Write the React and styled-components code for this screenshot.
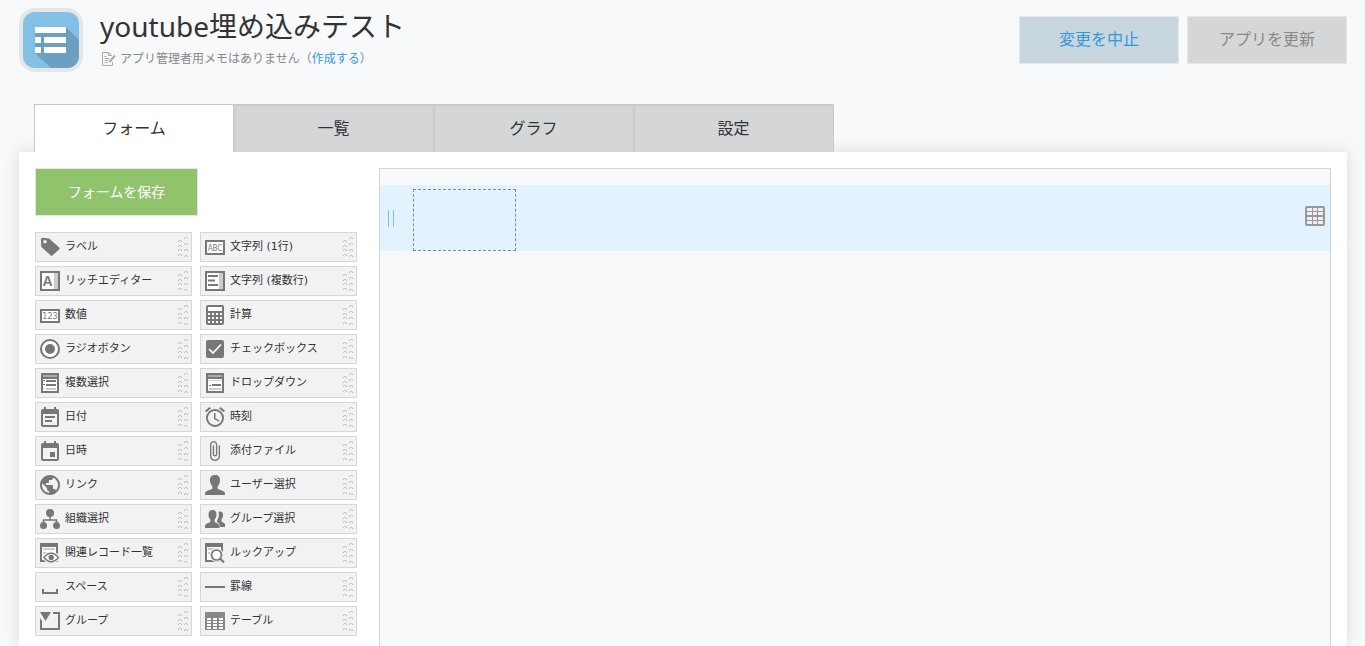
import React, { useState } from "react";
import styled, { createGlobalStyle, css } from "styled-components";

const GlobalStyle = createGlobalStyle`
  *, *::before, *::after { box-sizing: border-box; }
  body {
    margin: 0;
    background: #f7f9fa;
    color: #333;
    font-family: "Noto Sans", "Noto Sans CJK JP", sans-serif;
    font-weight: 400;
  }
  button { font: inherit; cursor: pointer; }
`;

const Page = styled.div`
  display: flex;
  flex-direction: column;
  height: 100vh;
  min-height: 640px;
  padding: 8px 18px 0 19px;
  overflow: hidden;
`;

const Header = styled.header`
  display: flex;
  align-items: flex-start;
  height: 96px;
`;

const AppLogo = styled.svg`
  flex: none;
  width: 64px;
  height: 64px;
  margin-right: 17px;
`;

const TitleBlock = styled.div`
  flex: 1;
  min-width: 0;
`;

const Title = styled.h1`
  margin: 0 0 4px;
  font-size: 28px;
  font-weight: 400;
  line-height: 36px;
  white-space: nowrap;
`;

const Memo = styled.p`
  display: flex;
  align-items: center;
  gap: 4px;
  margin: 0;
  padding-left: 2px;
  color: #888;
  font-size: 12px;
  line-height: 22px;
`;

const MemoLink = styled.a`
  color: #3498db;
  text-decoration: none;
`;

const Actions = styled.div`
  display: flex;
  gap: 8px;
  padding-top: 8px;
`;

const Button = styled.button`
  height: 48px;
  padding: 0 0 4px;
  border: 1px solid #e3e7e8;
  ${({ $kind }) =>
    $kind === "save"
      ? css`width: 163px; padding-bottom: 2px; background: #91c36c; color: #fff; font-size: 14px;`
      : $kind === "cancel"
      ? css`width: 160px; background: #c8d6dd; color: #3498db; font-size: 16px;`
      : css`width: 160px; background: #d4d6d7; color: #888; font-size: 16px;`}
`;

const Tabs = styled.nav`
  position: relative;
  z-index: 1;
  display: flex;
  padding-left: 15px;
`;

const Tab = styled.button`
  width: 200px;
  height: 48px;
  padding: 0 0 4px;
  border: 0;
  border-top: 1px solid #c4c8ca;
  border-right: 1px solid #c7cbcc;
  background: #d4d6d7;
  box-shadow: inset 1px 1px 2px rgba(80, 100, 105, 0.1);
  color: #333;
  font-size: 16px;
  ${({ $active }) =>
    $active &&
    css`
      border-left: 1px solid #c4c8ca;
      background: #fff;
      box-shadow: none;
    `}
`;

const Panel = styled.main`
  display: flex;
  flex: 1;
  gap: 22px;
  padding: 16px 16px 0;
  background: #fff;
  box-shadow: 0 0 16px rgba(0, 0, 0, 0.12);
`;

const Sidebar = styled.aside`
  flex: none;
  width: 322px;
`;

const Palette = styled.div`
  display: grid;
  grid-template-columns: 1fr 1fr;
  gap: 4px 8px;
  margin-top: 16px;
`;

const Field = styled.button`
  display: flex;
  align-items: center;
  height: 30px;
  padding: 0 2px 0 4px;
  border: 1px solid #d4d7d7;
  background: #f2f2f2;
  color: #333;
`;

const FieldIcon = styled.svg`
  flex: none;
  width: 20px;
  height: 20px;
  fill: #777;
`;

const FieldName = styled.span`
  flex: 1;
  padding: 0 0 1px 5px;
  font-family: "DejaVu Sans", "Noto Sans CJK JP", sans-serif;
  font-size: 11px;
  line-height: 16px;
  text-align: left;
  white-space: nowrap;
`;

const Grip = styled.svg`
  flex: none;
  width: 11px;
  height: 22px;
  fill: none;
  stroke: #bbb;
`;

const Canvas = styled.section`
  flex: 1;
  min-width: 0;
  padding-top: 16px;
  border: 1px solid #d4d7d7;
  border-bottom: 0;
  background: #f7f9fa;
`;

const DropRow = styled.div`
  display: flex;
  align-items: center;
  height: 66px;
  padding: 0 5px 0 8px;
  background: #e2f2fe;
`;

const RowHandle = styled.div`
  width: 6px;
  height: 17px;
  margin-right: 19px;
  border: solid #7cbfe8;
  border-width: 0 1px;
`;

const DropSlot = styled.div`
  align-self: flex-end;
  width: 103px;
  height: 62px;
  margin-right: auto;
  border: 1px dashed #888;
`;

const TableButton = styled.button`
  display: flex;
  padding: 0 0 4px;
  border: 0;
  background: none;
`;

const MATERIAL = {
  date: ["2 1 20 20", "M17 10H7v2h10v-2zm2-7h-1V1h-2v2H8V1H6v2H5c-1.11 0-1.99.9-1.99 2L3 19c0 1.1.89 2 2 2h14c1.1 0 2-.9 2-2V5c0-1.1-.9-2-2-2zm0 16H5V8h14v11zm-5-5H7v2h7v-2z"],
  datetime: ["2 1 20 20", "M17 12h-5v5h5v-5zM16 1v2H8V1H6v2H5c-1.11 0-1.99.9-1.99 2L3 19a2 2 0 0 0 2 2h14c1.1 0 2-.9 2-2V5c0-1.1-.9-2-2-2h-1V1h-2zm3 18H5V8h14v11z"],
  link: ["2 2 20 20", "M12 2C6.48 2 2 6.48 2 12s4.48 10 10 10 10-4.48 10-10S17.52 2 12 2zm-1 17.93c-3.95-.49-7-3.85-7-7.93 0-.62.08-1.21.21-1.79L9 15v1c0 1.1.9 2 2 2v1.93zm6.9-2.54c-.26-.81-1-1.39-1.9-1.39h-1v-3c0-.55-.45-1-1-1H8v-2h2c.55 0 1-.45 1-1V7h2c1.1 0 2-.9 2-2v-.41c2.93 1.19 5 4.06 5 7.41 0 2.08-.8 3.97-2.1 5.39z"],
  time: ["2 2 20 20", "M22 5.72l-4.6-3.86-1.29 1.53 4.6 3.86L22 5.72zM7.88 3.39L6.6 1.86 2 5.71l1.29 1.53 4.59-3.85zM12.5 8H11v6l4.75 2.85.75-1.23-4-2.37V8zM12 4a9 9 0 1 0 0 18 9 9 0 0 0 0-18zm0 16c-3.87 0-7-3.13-7-7s3.13-7 7-7 7 3.13 7 7-3.13 7-7 7z"],
  file: ["1.5 1 22 22", "M16.5 6v11.5c0 2.21-1.79 4-4 4s-4-1.79-4-4V5a2.5 2.5 0 0 1 5 0v10.5c0 .55-.45 1-1 1s-1-.45-1-1V6H10v9.5a2.5 2.5 0 0 0 5 0V5c0-2.21-1.79-4-4-4S7 2.79 7 5v12.5c0 3.04 2.46 5.5 5.5 5.5s5.5-2.46 5.5-5.5V6h-1.5z"],
};

const gray = "#777";

const DRAWN = {
  label: <path fillRule="evenodd" d="M2.5.8 8.5 1.6Q9.5 1.8 10.2 2.5L19.2 10.6Q20 11.4 19.2 12.2L12.4 18.6Q11.6 19.4 10.8 18.6L2 10.6Q1.4 10 1.3 9.2L.9 2.6Q.9.8 2.5.8ZM5 3A1.8 1.8 0 1 0 5 6.6 1.8 1.8 0 0 0 5 3Z" />,
  rich: (
    <>
      <rect x="1" y="1" width="18" height="18" fill="#fff" stroke={gray} strokeWidth="2" />
      <rect x="14" y="2" width="4" height="16" fill="#ccc" />
      <text x="2.6" y="15" fontFamily="Liberation Sans" fontSize="14" fontWeight="700">A</text>
    </>
  ),
  number: (
    <>
      <rect x="1" y="5" width="18" height="12" fill="#fff" stroke={gray} strokeWidth="2" />
      <text x="10" y="14" textAnchor="middle" fontFamily="DejaVu Sans" fontSize="8" fontWeight="400">123</text>
    </>
  ),
  text: (
    <>
      <rect x="1" y="4" width="18" height="13" fill="#fff" stroke={gray} strokeWidth="2" />
      <text x="10" y="14" textAnchor="middle" fontFamily="DejaVu Sans Condensed, DejaVu Sans" fontSize="8" fontWeight="400">ABC</text>
    </>
  ),
  multiline: (
    <>
      <rect x="1" y="1" width="18" height="18" fill="#fff" stroke={gray} strokeWidth="2" />
      <rect x="14" y="2" width="4" height="16" fill="#ccc" />
      <path d="M3 4h10v2H3zM3 8.5h7v2H3zM3 13h10v2H3z" />
    </>
  ),
  calc: (
    <>
      <rect x="1" width="18" height="20" rx="2" />
      <rect x="3" y="2" width="14" height="4" fill="#fff" />
      {[8, 12, 16].map((y) => [3, 7, 11, 15].map((x) => (
        <rect key={`${x}-${y}`} x={x} y={y} width="2" height="2" fill="#fff" />
      )))}
    </>
  ),
  radio: (
    <>
      <circle cx="10" cy="10" r="9" fill="#fff" stroke={gray} strokeWidth="2" />
      <circle cx="10" cy="10" r="5" />
    </>
  ),
  check: (
    <>
      <rect x="1" y="1" width="18" height="18" rx="2" />
      <path d="m4 10 4 4 8-8.5" fill="none" stroke="#fff" strokeWidth="1.7" />
    </>
  ),
  multiselect: (
    <>
      <path d="M1 0h18v20H1z" />
      <path d="M3 2h14v2H3z" fill="#aaa" />
      <path d="M3 6h14v12H3z" fill="#fff" />
      <path d="M3 7h2v1H3zM6 7h10v2H6zM3 11h2v1H3zM6 11h10v2H6z" />
      <path d="M3 15h2v1H3zM6 15h10v2H6z" fill="#ccc" />
    </>
  ),
  dropdown: (
    <>
      <path d="M1 0h18v20H1z" />
      <path d="M3 2h14v2H3z" fill="#aaa" />
      <path d="M3 6h14v12H3z" fill="#fff" />
      <path d="M4 12h2v1H4zM7 11h9v2H7z" />
      <path d="M4 7h12v1H4zM4 15h12v2H4z" fill="#ccc" />
    </>
  ),
  user: <path d="M10 0c3.4 0 5.2 2 5 5.4-.1 2.5-1 4.6-2.4 5.8v2.3c.5 1.2 6.8 1.9 7.2 4.1L20 20H0l.2-2.4c.4-2.2 6.7-2.9 7.2-4.1v-2.3C6 10 5.1 7.9 5 5.4 4.8 2 6.6 0 10 0Z" />,
  org: (
    <>
      <circle cx="10" cy="4" r="4" />
      <circle cx="3.5" cy="16.5" r="3.5" />
      <circle cx="16.5" cy="16.5" r="3.5" />
      <path d="M10 6v5M3.5 16v-5h13v5" fill="none" stroke={gray} strokeWidth="1.5" />
    </>
  ),
  users: (
    <>
      <path d="M13.5 3c3-1.3 4.8.5 4.5 3.5-.1 1.8-.7 3-1.5 3.8v2c.4 1 3.3 1.5 3.5 3.2V18h-4.800c-.2-3-1.6-4-3.2-4.900v-1.500c1.8-2.500 2.300-5.700 1.500-8.600Z" />
      <path d="M7.5 1c3 0 4.300 2 4 5-.2 2-.9 3.600-1.900 4.500v2.300c.5 1.100 4.800 1.500 5 4V19H0v-2.200c.2-2.500 5-2.900 5.400-4v-2.300C4.300 9.600 3.600 8 3.500 6c-.2-3 1.100-5 4-5Z" />
    </>
  ),
  related: (
    <>
      <path d="M1 1h16v17H1z" fill="#fff" stroke={gray} strokeWidth="2" />
      <path d="M0 0h18v4H0z" />
      <path d="M3 5h12v2H3zM3 9h4v2H3z" fill="#ccc" />
      <path d="M4 14.5Q11 6 18.5 14.5 11 23 4 14.5Z" fill="#fff" stroke="#f2f2f2" strokeWidth="4" />
      <path d="M4 14.5Q11 6 18.5 14.5 11 23 4 14.5Z" fill="#fff" stroke={gray} strokeWidth="1.3" />
      <circle cx="11.2" cy="14.5" r="2.7" />
    </>
  ),
  lookup: (
    <>
      <path d="M1 1h16v17H1z" fill="#fff" stroke={gray} strokeWidth="2" />
      <path d="M0 0h18v4H0z" />
      <path d="M3 5h11v2H3zM3 9h3v2H3z" fill="#ccc" />
      <path d="m14.5 15.5 4 4" stroke="#f2f2f2" strokeWidth="5" />
      <circle cx="11.5" cy="12" r="5" fill="#fff" stroke="#f2f2f2" strokeWidth="4" />
      <circle cx="11.5" cy="12" r="5" fill="#fff" stroke={gray} strokeWidth="1.7" />
      <path d="m15 15.5 4 4" stroke={gray} strokeWidth="2.2" />
    </>
  ),
  space: <path d="M2 12h2v3h12v-3h2v5H2z" />,
  line: <path d="M0 9h20v2H0z" />,
  group: <path d="M0 1h11L5.5 10ZM0 7l2 3v7h16V3h-5V1h7v18H0Z" />,
  table: (
    <>
      <path d="M0 1h20v18H0z" fill="#888" />
      {[7, 10, 13, 16].map((y) => [2, 8, 14].map((x) => (
        <rect key={`${x}-${y}`} x={x} y={y} width="4" height="2" fill="#fff" />
      )))}
    </>
  ),
};

const FIELDS = [
  ["label", "ラベル"], ["text", "文字列 (1行)"],
  ["rich", "リッチエディター"], ["multiline", "文字列 (複数行)"],
  ["number", "数値"], ["calc", "計算"],
  ["radio", "ラジオボタン"], ["check", "チェックボックス"],
  ["multiselect", "複数選択"], ["dropdown", "ドロップダウン"],
  ["date", "日付"], ["time", "時刻"],
  ["datetime", "日時"], ["file", "添付ファイル"],
  ["link", "リンク"], ["user", "ユーザー選択"],
  ["org", "組織選択"], ["users", "グループ選択"],
  ["related", "関連レコード一覧"], ["lookup", "ルックアップ"],
  ["space", "スペース"], ["line", "罫線"],
  ["group", "グループ"], ["table", "テーブル"],
];

const TABS = ["フォーム", "一覧", "グラフ", "設定"];

function PaletteField({ icon, name }) {
  const material = MATERIAL[icon];
  return (
    <Field type="button">
      <FieldIcon viewBox={material ? material[0] : "0 0 20 20"} aria-hidden="true">
        {material ? <path d={material[1]} /> : DRAWN[icon]}
      </FieldIcon>
      <FieldName>{name}</FieldName>
      <Grip viewBox="0 0 11 22" aria-hidden="true">
        {[4, 9, 13, 18].map((y) => <path key={y} d={`M.5 ${y + 2}V${y + 1}L1.5 ${y + 0.5}H2.5L3.5 ${y + 1}V${y + 2}`} />)}
        {[1, 7, 13, 19].map((y) => <path key={y} d={`M6.5 ${y + 2}V${y + 1}L7.5 ${y + 0.5}H8.5L9.5 ${y + 1}V${y + 2}`} />)}
      </Grip>
    </Field>
  );
}

export default function App() {
  const [active, setActive] = useState(0);
  return (
    <>
      <GlobalStyle />
      <Page lang="ja">
        <Header>
          <AppLogo viewBox="0 0 64 64" aria-hidden="true">
            <rect width="64" height="64" rx="16" fill="#e3e7e8" />
            <rect x="4" y="4" width="56" height="56" rx="12" fill="#84bfe5" />
            <path d="M47 19 60 32v16a12 12 0 0 1-12 12H32L16 45V25Z" fill="#6c9fc0" />
            <path d="M16 19h31v6H16zM16 29h6v6h-6zM25 29h22v6H25zM16 39h6v6h-6zM25 39h22v6H25z" fill="#fff" />
          </AppLogo>
          <TitleBlock>
            <Title>youtube埋め込みテスト</Title>
            <Memo>
              <svg width="14" height="14" viewBox="0 0 14 14" fill="none" stroke="#aaa" aria-hidden="true">
                <path d="M10.5 10v3.5h-10V.5h6l3 3M6.5.5v3h3M2.5 4.5h2M2.5 6.5h5M2.5 8.5h4M2.5 10.5h3" />
                <path d="m7.5 10 5.5-6.5" strokeWidth="2" />
              </svg>
              <span>
                アプリ管理者用メモはありません（<MemoLink href="#memo">作成する</MemoLink>）
              </span>
            </Memo>
          </TitleBlock>
          <Actions>
            <Button type="button" $kind="cancel">変更を中止</Button>
            <Button type="button" $kind="update">アプリを更新</Button>
          </Actions>
        </Header>
        <Tabs>
          {TABS.map((name, i) => (
            <Tab key={name} type="button" $active={i === active} onClick={() => setActive(i)}>
              {name}
            </Tab>
          ))}
        </Tabs>
        <Panel>
          <Sidebar>
            <Button type="button" $kind="save">フォームを保存</Button>
            <Palette>
              {FIELDS.map(([icon, name]) => <PaletteField key={icon} icon={icon} name={name} />)}
            </Palette>
          </Sidebar>
          <Canvas aria-label="フォーム">
            <DropRow>
              <RowHandle />
              <DropSlot />
              <TableButton type="button" aria-label="テーブル">
                <svg width="20" height="20" viewBox="0 0 20 20" aria-hidden="true">
                  <rect width="20" height="20" rx="2" fill="#999" />
                  {[2, 6, 11, 15].map((y) => [2, 8, 13].map((x) => (
                    <rect key={`${x}-${y}`} x={x} y={y} width={x === 13 ? 5 : x === 8 ? 4 : 5} height="3" fill="#eee" />
                  )))}
                </svg>
              </TableButton>
            </DropRow>
          </Canvas>
        </Panel>
      </Page>
    </>
  );
}
